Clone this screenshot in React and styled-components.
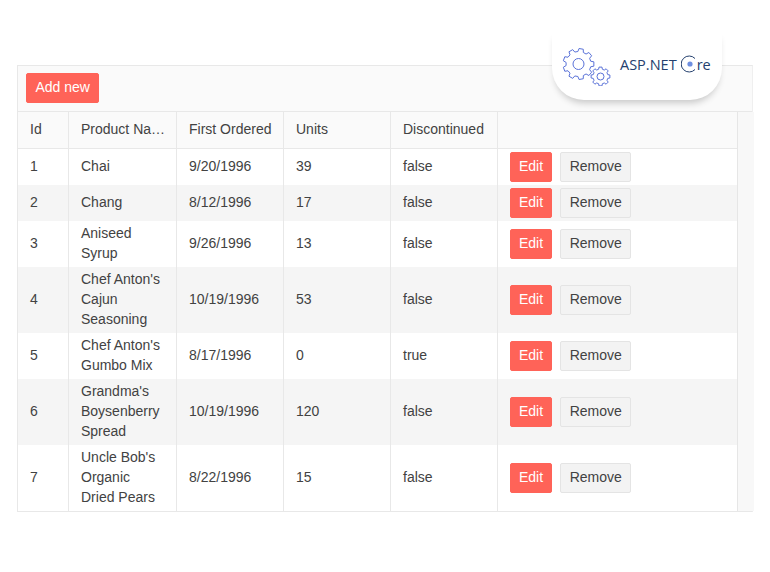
import React from "react";
import styled, { createGlobalStyle } from "styled-components";

const GlobalStyle = createGlobalStyle`
  html, body {
    margin: 0;
    background: #ffffff;
    font-family: "Liberation Sans", Arial, sans-serif;
    font-size: 14px;
    color: #424242;
  }
`;

const Page = styled.div`
  position: relative;
  width: 770px;
  height: 572px;
  box-sizing: border-box;
  padding: 65px 17px 0;
  overflow: hidden;
`;

const Grid = styled.div`
  width: 736px;
  box-sizing: border-box;
  border: 1px solid #e8e8e8;
  border-right-color: #efefef;
`;

const Toolbar = styled.div`
  display: flex;
  align-items: center;
  height: 46px;
  box-sizing: border-box;
  padding: 7px 8px 8px;
  background: #fafafa;
  border-bottom: 1px solid #e8e8e8;
`;

const BaseButton = styled.button`
  height: 30px;
  box-sizing: border-box;
  border-radius: 2px;
  font-family: inherit;
  font-size: 14px;
  line-height: 20px;
  white-space: nowrap;
  cursor: pointer;
`;

const PrimaryButton = styled(BaseButton)`
  padding: 3px ${(props) => props.$pad}px 5px;
  border: 1px solid #ff6358;
  background: #ff6358;
  color: #ffffff;
`;

const SecondaryButton = styled(BaseButton)`
  margin-left: 8px;
  padding: 3px 8.5px 5px;
  border: 1px solid #e4e4e4;
  background: #f3f3f3;
  color: #424242;
`;

const Table = styled.table`
  width: 719px;
  table-layout: fixed;
  border-collapse: separate;
  border-spacing: 0;
`;

const HeadCell = styled.th`
  width: ${(props) => props.$width}px;
  height: 37px;
  box-sizing: border-box;
  padding: 0 10px 2px 12px;
  background: #fafafa;
  border-left: 1px solid #e8e8e8;
  border-bottom: 1px solid #e8e8e8;
  font-weight: 400;
  text-align: left;
  white-space: nowrap;
  overflow: hidden;
  text-overflow: ellipsis;

  &:first-child {
    border-left: 0;
  }
`;

const Row = styled.tr`
  background: ${(props) => (props.$alt ? "#f5f5f5" : "#ffffff")};
`;

const Cell = styled.td`
  box-sizing: border-box;
  padding: 2px 12px 4px;
  border-left: 1px solid #e8e8e8;
  line-height: 20px;
  vertical-align: middle;

  &:first-child {
    border-left: 0;
  }
`;

const ActionCell = styled(Cell)`
  padding: 3px 12px;
`;

const Gutter = styled.div`
  width: 16px;
  flex: none;
  border-left: 1px solid #e6e6e6;
  background: #f8f8f8;
`;

const Body = styled.div`
  display: flex;
`;

const TablePane = styled.div`
  flex: none;
  width: 719px;
`;

const LogoPill = styled.div`
  position: absolute;
  left: 552px;
  top: 30px;
  display: flex;
  align-items: center;
  gap: 8px;
  width: 170px;
  height: 70px;
  box-sizing: border-box;
  padding: 0 0 2px 10px;
  background: #ffffff;
  border-radius: 0 0 32px 32px;
  box-shadow: 0 6px 7px -3px rgba(0, 0, 0, 0.2);
`;

const LogoText = styled.span`
  display: flex;
  align-items: center;
  font-family: "Open Sans", sans-serif;
  font-size: 14.5px;
  color: #24406e;
  white-space: nowrap;
`;

const CoreMark = styled.svg`
  width: 16px;
  height: 18px;
  margin-left: 4px;
`;

// teeth outline for the logo gears
const gearPath = (cx, cy, outer, inner, teeth) => {
  const step = (Math.PI * 2) / teeth;
  const pts = [];
  for (let i = 0; i < teeth; i++) {
    const a = i * step;
    const at = (r, o) => [
      (cx + r * Math.cos(a + o)).toFixed(2),
      (cy + r * Math.sin(a + o)).toFixed(2),
    ];
    pts.push(at(inner, -step * 0.32), at(outer, -step * 0.2), at(outer, step * 0.2), at(inner, step * 0.32));
  }
  return "M" + pts.map((p) => p.join(" ")).join("L") + "Z";
};

const Gears = () => (
  <svg width="50" height="44" viewBox="0 0 50 44" fill="none" stroke="#5a72d8" strokeWidth="1">
    <path d={gearPath(16.5, 22, 15.5, 12.5, 9)} />
    <circle cx="16.5" cy="22" r="5.5" />
    <path d={gearPath(38.5, 34.5, 9.5, 7.5, 8)} />
    <circle cx="38.5" cy="34.5" r="3.5" />
  </svg>
);

const columns = [
  { title: "Id", width: 50 },
  { title: "Product Name", width: 108 },
  { title: "First Ordered", width: 107 },
  { title: "Units", width: 107 },
  { title: "Discontinued", width: 107 },
  { title: "", width: 240 },
];

const products = [
  { id: 1, name: "Chai", date: "9/20/1996", units: 39, disc: "false" },
  { id: 2, name: "Chang", date: "8/12/1996", units: 17, disc: "false" },
  { id: 3, name: "Aniseed Syrup", date: "9/26/1996", units: 13, disc: "false" },
  { id: 4, name: "Chef Anton's Cajun Seasoning", date: "10/19/1996", units: 53, disc: "false" },
  { id: 5, name: "Chef Anton's Gumbo Mix", date: "8/17/1996", units: 0, disc: "true" },
  { id: 6, name: "Grandma's Boysenberry Spread", date: "10/19/1996", units: 120, disc: "false" },
  { id: 7, name: "Uncle Bob's Organic Dried Pears", date: "8/22/1996", units: 15, disc: "false" },
];

const App = () => (
  <Page>
    <GlobalStyle />
    <Grid>
      <Toolbar>
        <PrimaryButton $pad={8.5}>Add new</PrimaryButton>
      </Toolbar>
      <Body>
        <TablePane>
          <Table>
            <thead>
              <tr>
                {columns.map((col) => (
                  <HeadCell key={col.title} $width={col.width}>
                    {col.title}
                  </HeadCell>
                ))}
              </tr>
            </thead>
            <tbody>
              {products.map((p, index) => (
                <Row key={p.id} $alt={index % 2 === 1}>
                  <Cell>{p.id}</Cell>
                  <Cell>{p.name}</Cell>
                  <Cell>{p.date}</Cell>
                  <Cell>{p.units}</Cell>
                  <Cell>{p.disc}</Cell>
                  <ActionCell>
                    <PrimaryButton $pad={8}>Edit</PrimaryButton>
                    <SecondaryButton>Remove</SecondaryButton>
                  </ActionCell>
                </Row>
              ))}
            </tbody>
          </Table>
        </TablePane>
        <Gutter />
      </Body>
    </Grid>
    <LogoPill>
      <Gears />
      <LogoText>
        ASP.NET
        <CoreMark viewBox="0 0 16 18" fill="none">
          <path d="M14 3.5A8 8 0 1 0 14 14.5" stroke="#24406e" strokeWidth="1" />
          <circle cx="9" cy="9" r="2.6" fill="#6f8fe0" />
        </CoreMark>
        re
      </LogoText>
    </LogoPill>
  </Page>
);

export default App;
